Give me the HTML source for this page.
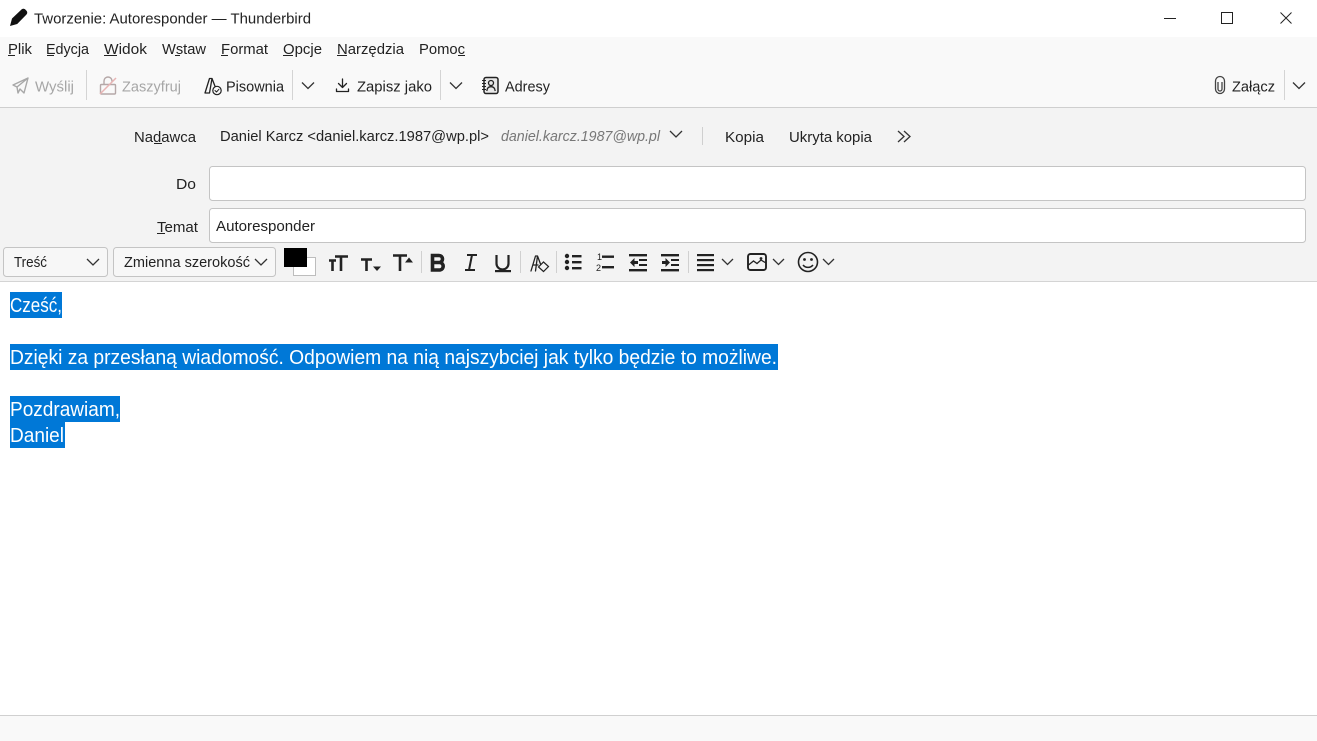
<!DOCTYPE html>
<html lang="pl">
<head>
<meta charset="utf-8">
<title>Tworzenie: Autoresponder — Thunderbird</title>
<style>
html,body{margin:0;padding:0;width:1317px;height:741px;overflow:hidden;background:#fff}
svg{display:block}
text{font-family:"Liberation Sans",sans-serif;font-size:15px;fill:#222;white-space:pre}
.g{fill:#a6a6a6}
.b{font-size:20px;fill:#fff}
.i{fill:none;stroke:#222;stroke-width:1.3;stroke-linecap:round;stroke-linejoin:round}
.t{fill:none;stroke:#222;stroke-width:2.6}
.c{fill:none;stroke:#333;stroke-width:1.3}
</style>
</head>
<body>
<svg width="1317" height="741" viewBox="0 0 1317 741" xmlns="http://www.w3.org/2000/svg">
<!-- backgrounds -->
<rect width="1317" height="741" fill="#fff"/>
<rect y="37" width="1317" height="70" fill="#f9f9f9"/>
<rect y="107" width="1317" height="1" fill="#cfcfcf"/>
<rect y="108" width="1317" height="173" fill="#f3f3f3"/>
<rect y="281" width="1317" height="1" fill="#d4d4d4"/>
<rect y="715" width="1317" height="1" fill="#d0d0d0"/>
<rect y="716" width="1317" height="25" fill="#f9f9f9"/>

<!-- title bar -->
<path d="M10 26l2-7.500 9.500-9c1-1 2.800-1 3.800 0l1.200 1.200c1 1 1 2.800 0 3.800l-9.300 9.500z" fill="#111"/>
<text x="34" y="23.500" textLength="277" lengthAdjust="spacingAndGlyphs">Tworzenie: Autoresponder — Thunderbird</text>
<rect x="1164" y="18" width="12" height="1" fill="#222"/>
<rect x="1221.500" y="12.500" width="11" height="11" fill="none" stroke="#222" stroke-width="1"/>
<path d="M1280.500 12.500l11 11M1291.500 12.500l-11 11" stroke="#222" stroke-width="1" fill="none"/>

<!-- menu -->
<text x="8" y="54" textLength="24" lengthAdjust="spacingAndGlyphs">Plik</text>
<text x="46" y="54" textLength="43" lengthAdjust="spacingAndGlyphs">Edycja</text>
<text x="104" y="54" textLength="43" lengthAdjust="spacingAndGlyphs">Widok</text>
<text x="162" y="54" textLength="44" lengthAdjust="spacingAndGlyphs">Wstaw</text>
<text x="221" y="54" textLength="47" lengthAdjust="spacingAndGlyphs">Format</text>
<text x="283" y="54" textLength="39" lengthAdjust="spacingAndGlyphs">Opcje</text>
<text x="337" y="54" textLength="67" lengthAdjust="spacingAndGlyphs">Narzędzia</text>
<text x="419" y="54" textLength="46" lengthAdjust="spacingAndGlyphs">Pomoc</text>
<g fill="#222">
<rect x="8" y="55" width="7" height="1"/>
<rect x="47" y="55" width="7" height="1"/>
<rect x="104" y="55" width="13" height="1"/>
<rect x="175" y="55" width="5" height="1"/>
<rect x="221" y="55" width="7" height="1"/>
<rect x="283" y="55" width="10" height="1"/>
<rect x="337" y="55" width="10" height="1"/>
<rect x="458" y="55" width="7" height="1"/>
</g>

<!-- toolbar -->
<path d="M13 85l15-7-4 15-4-4-2 4-1-6zM28 78l-11 9" fill="none" stroke="#a8a8a8" stroke-width="1.400" stroke-linejoin="round"/>
<text class="g" x="35" y="91.500" textLength="39" lengthAdjust="spacingAndGlyphs">Wyślij</text>
<rect x="86" y="70" width="1" height="30" fill="#d4d4d4"/>
<rect x="100.500" y="84.500" width="15" height="9.500" rx="1" fill="none" stroke="#b5a8a8" stroke-width="1.400"/>
<path d="M104 84v-3a4 4 0 0 1 8 0v1" fill="none" stroke="#b5a8a8" stroke-width="1.400"/>
<path d="M100 94l16-16" stroke="#e8b4b4" stroke-width="1.500"/>
<text class="g" x="122" y="91.500" textLength="59" lengthAdjust="spacingAndGlyphs">Zaszyfruj</text>
<path d="M205 93l4.500-14.500h2.500l-2.500 14.500zM212 78.500l3.500 9" fill="none" stroke="#222" stroke-width="1.300" stroke-linejoin="round"/>
<circle cx="217" cy="90.500" r="4.200" fill="#f9f9f9" stroke="#222" stroke-width="1.200"/>
<path d="M215 90.500l1.500 1.500 2.400-2.700" class="i" style="stroke-width:1"/>
<text x="226" y="91.500" textLength="58" lengthAdjust="spacingAndGlyphs">Pisownia</text>
<rect x="292" y="70" width="1" height="30" fill="#d4d4d4"/>
<path d="M302 82.500l6 6 6-6" class="c"/>
<path d="M342.500 79v8M338.500 83.500l4 4 4-4M336.500 89v2.500h12V89" class="i"/>
<text x="357" y="91.500" textLength="75" lengthAdjust="spacingAndGlyphs">Zapisz jako</text>
<rect x="440" y="70" width="1" height="30" fill="#d4d4d4"/>
<path d="M450 82.500l6 6 6-6" class="c"/>
<rect x="484" y="77.500" width="14" height="16" rx="2" fill="#e9e9e9" stroke="#222" stroke-width="1.500"/>
<path d="M482 80.500h4M482 83.500h4M482 86.500h4M482 89.500h4" stroke="#222" stroke-width="1.100"/>
<circle cx="491" cy="83" r="2.500" fill="none" stroke="#222" stroke-width="1.300"/>
<path d="M486.800 91c.3-3 2-4.300 4.200-4.300s3.900 1.300 4.200 4.300" fill="none" stroke="#222" stroke-width="1.300"/>
<text x="505" y="91.500" textLength="45" lengthAdjust="spacingAndGlyphs">Adresy</text>
<path d="M1222 82v7a2 2 0 0 1-4 0v-7M1215.500 81v8a4.500 4.500 0 0 0 9 0v-8a4.500 4.500 0 0 0-9 0z" fill="none" stroke="#444" stroke-width="1.300"/>
<text x="1232" y="91.500" textLength="43" lengthAdjust="spacingAndGlyphs">Załącz</text>
<rect x="1284" y="70" width="1" height="30" fill="#d4d4d4"/>
<path d="M1293 82.500l6 6 6-6" class="c"/>

<!-- header -->
<text x="134" y="142" textLength="62" lengthAdjust="spacingAndGlyphs">Nadawca</text>
<rect x="154" y="143" width="8" height="1" fill="#222"/>
<text x="220" y="141" textLength="269" lengthAdjust="spacingAndGlyphs">Daniel Karcz &lt;daniel.karcz.1987@wp.pl&gt;</text>
<text x="501" y="141" textLength="159" lengthAdjust="spacingAndGlyphs" font-style="italic" style="fill:#777">daniel.karcz.1987@wp.pl</text>
<path d="M670 131l6 6 6-6" class="c"/>
<rect x="702" y="127" width="1" height="18" fill="#cfcfcf"/>
<text x="725" y="142" textLength="39" lengthAdjust="spacingAndGlyphs">Kopia</text>
<text x="789" y="142" textLength="83" lengthAdjust="spacingAndGlyphs">Ukryta kopia</text>
<path d="M898 131l6 5.500-6 5.500M904 131l6 5.500-6 5.500" class="c"/>

<text x="176" y="189" textLength="20" lengthAdjust="spacingAndGlyphs">Do</text>
<rect x="209.500" y="166.500" width="1096" height="34" rx="3" fill="#fff" stroke="#c4c4c4"/>
<text x="157" y="232" textLength="41" lengthAdjust="spacingAndGlyphs">Temat</text>
<rect x="157" y="233" width="8" height="1" fill="#222"/>
<rect x="209.500" y="208.500" width="1096" height="34" rx="3" fill="#fff" stroke="#c4c4c4"/>
<text x="216" y="231" textLength="99" lengthAdjust="spacingAndGlyphs">Autoresponder</text>

<!-- format bar -->
<rect x="3.500" y="247.500" width="104" height="29" rx="3" fill="#f7f7f7" stroke="#c4c4c4"/>
<text x="14" y="267" textLength="33" lengthAdjust="spacingAndGlyphs">Treść</text>
<path d="M87 259l6 6 6-6" class="c"/>
<rect x="113.500" y="247.500" width="162" height="29" rx="3" fill="#f7f7f7" stroke="#c4c4c4"/>
<text x="124" y="267" textLength="126" lengthAdjust="spacingAndGlyphs">Zmienna szerokość</text>
<path d="M255 259l6 6 6-6" class="c"/>
<rect x="293.500" y="257.500" width="22" height="18" fill="#fff" stroke="#bdbdbd"/>
<rect x="284" y="248" width="23" height="19" fill="#000"/>

<!-- font size -->
<path d="M329 260.500h7M332.500 260.500v10.500M335 256.500h13M341 256.500v14.500" class="t"/>
<path d="M361 259.500h11M366.500 259.500v11.500" class="t"/>
<path d="M373 266.500h8l-4 4.500z" fill="#222"/>
<path d="M393 255.500h14M400 255.500v15.500" class="t"/>
<path d="M405 262.500h8l-4-5z" fill="#222"/>
<rect x="421" y="251" width="1" height="22" fill="#d0d0d0"/>

<!-- B I U -->
<path d="M432.500 255.500h6.500a3.400 3.400 0 0 1 0 7h-6.500zM432.500 262.500h7.500a3.800 3.800 0 0 1 0 7.500h-7.500z" fill="none" stroke="#222" stroke-width="3.600"/>
<path d="M467 255h10M465 270h10M472 255l-3 15" fill="none" stroke="#222" stroke-width="2"/>
<path d="M496.500 255v8.500a6 6 0 0 0 12 0V255" fill="none" stroke="#222" stroke-width="2.200"/>
<rect x="495" y="270" width="16" height="2.200" fill="#222"/>
<rect x="520" y="251" width="1" height="22" fill="#d0d0d0"/>

<!-- clear formatting -->
<path d="M531 271l4.500-15h2l-2 15M537.500 256l3 8M533 265h5" class="i"/>
<path d="M543.500 262l5 4.500-5 5-5-4.500z" fill="#f3f3f3" stroke="#222" stroke-width="1.200"/>
<rect x="556" y="251" width="1" height="22" fill="#d0d0d0"/>

<!-- lists -->
<g fill="#222">
<circle cx="567" cy="256" r="2.200"/><circle cx="567" cy="262" r="2.200"/><circle cx="567" cy="268" r="2.200"/>
<rect x="572" y="255" width="9.500" height="2.400"/><rect x="572" y="261" width="9.500" height="2.400"/><rect x="572" y="267" width="9.500" height="2.400"/>
<rect x="602" y="255.500" width="12" height="2.400"/><rect x="602" y="266" width="12" height="2.400"/>
</g>
<text x="597" y="260" style="font-size:9px;fill:#222">1</text>
<text x="596" y="271" style="font-size:9px;fill:#222">2</text>

<!-- indent -->
<g fill="#222">
<rect x="629" y="254" width="18" height="2.400"/><rect x="639" y="259" width="8" height="2"/><rect x="639" y="264" width="8" height="2"/><rect x="629" y="269" width="18" height="2.400"/>
<path d="M630 262.500l4.500-4.500v3h3.500v3h-3.500v3z"/>
<rect x="661" y="254" width="18" height="2.400"/><rect x="671" y="259" width="8" height="2"/><rect x="671" y="264" width="8" height="2"/><rect x="661" y="269" width="18" height="2.400"/>
<path d="M670 262.500l-4.500-4.500v3H662v3h3.500v3z"/>
</g>
<rect x="688" y="251" width="1" height="22" fill="#d0d0d0"/>

<!-- align -->
<g fill="#222">
<rect x="697" y="254" width="17" height="2.200"/><rect x="697" y="259" width="17" height="2.200"/><rect x="697" y="264" width="17" height="2.200"/><rect x="697" y="269" width="17" height="2.200"/>
</g>
<path d="M722 259l5.500 5.500 5.500-5.500" class="c"/>

<!-- image -->
<rect x="748" y="254" width="18" height="16" rx="2.500" fill="none" stroke="#222" stroke-width="1.900"/>
<path d="M748.500 265l5-4 3.500 2.500 4-3.500 5 3" fill="none" stroke="#222" stroke-width="1.300"/>
<circle cx="761" cy="258.500" r="1.400" fill="#222"/>
<path d="M773 259l5.500 5.500 5.500-5.500" class="c"/>

<!-- emoji -->
<circle cx="808" cy="262" r="9.500" fill="none" stroke="#222" stroke-width="1.600"/>
<circle cx="804.500" cy="259.500" r="1.400" fill="#222"/>
<circle cx="811.500" cy="259.500" r="1.400" fill="#222"/>
<path d="M803 265c2.500 3.200 7.500 3.200 10 0" fill="none" stroke="#222" stroke-width="1.500"/>
<path d="M823 259l5.500 5.500 5.500-5.500" class="c"/>

<!-- body -->
<g fill="#0078d7">
<rect x="10" y="292" width="52" height="26"/>
<rect x="10" y="344" width="768" height="26"/>
<rect x="10" y="396" width="110" height="26"/>
<rect x="10" y="422" width="55" height="26"/>
</g>
<text class="b" x="10" y="312" textLength="52" lengthAdjust="spacingAndGlyphs">Cześć,</text>
<text class="b" x="10" y="364" textLength="767" lengthAdjust="spacingAndGlyphs">Dzięki za przesłaną wiadomość. Odpowiem na nią najszybciej jak tylko będzie to możliwe.</text>
<text class="b" x="10" y="416" textLength="110" lengthAdjust="spacingAndGlyphs">Pozdrawiam,</text>
<text class="b" x="10" y="442" textLength="54" lengthAdjust="spacingAndGlyphs">Daniel</text>
</svg>
</body>
</html>
